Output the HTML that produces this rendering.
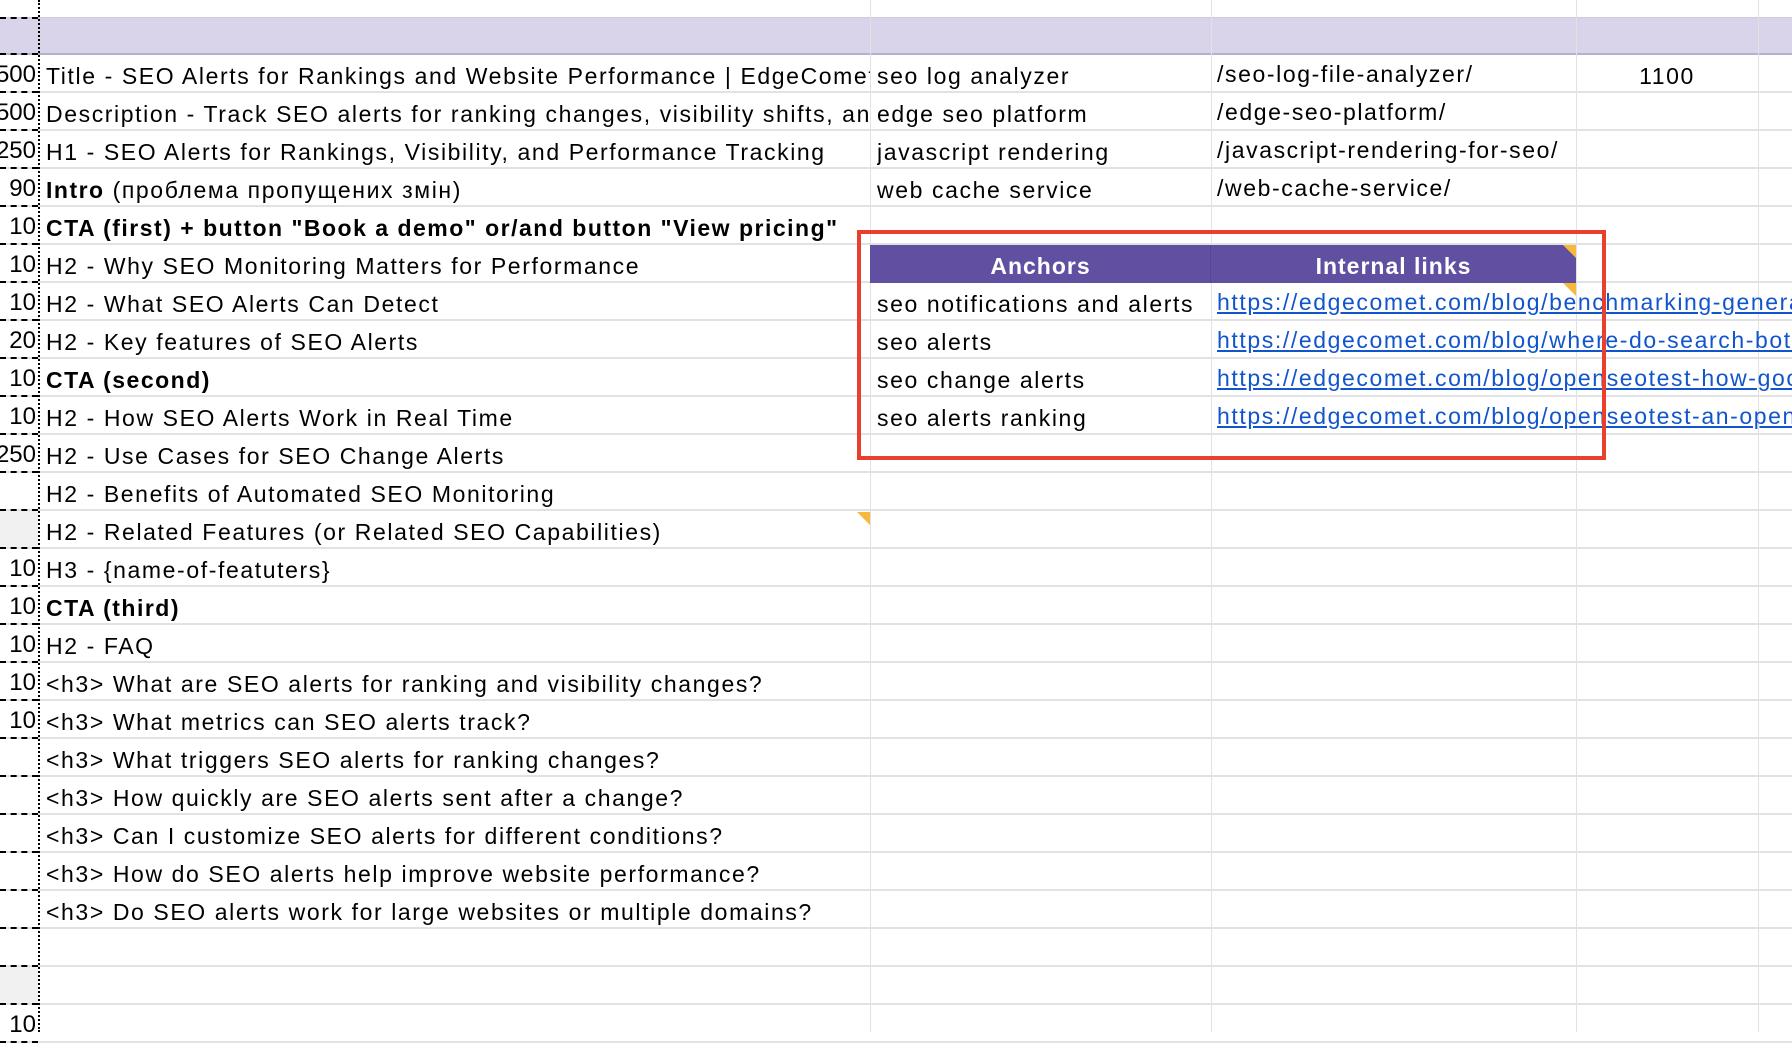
<!DOCTYPE html>
<html><head><meta charset="utf-8"><style>
*{margin:0;padding:0;box-sizing:border-box}
body{width:1792px;height:1032px;overflow:hidden;background:#fff;position:relative;font-family:"Liberation Sans","Noto Sans CJK SC",sans-serif;font-size:23px;letter-spacing:1.6px;color:#000}
.hl{position:absolute;left:0;width:1792px;height:2px;background:#e2e2e2}
.vl{position:absolute;top:0;width:1px;height:1032px;background:#e2e2e2}
.t{position:absolute;white-space:nowrap;overflow:hidden;line-height:38px;height:38px;padding-top:2px}
.n{position:absolute;left:0;width:36px;text-align:right;direction:rtl;line-height:38px;height:38px;overflow:hidden;white-space:nowrap;letter-spacing:0;font-size:24px;padding-top:1px}
.b{font-weight:bold;letter-spacing:1.5px}
a{color:#1155cc;text-decoration:underline}
.dh{position:absolute;left:0;width:38px;border-top:2px dashed #000;height:0}
</style></head><body>
<div style="position:absolute;left:0;top:17px;width:1792px;height:38px;background:#d9d4e9;border-bottom:2px solid #b7b2cc;border-top:1px solid #cfcae0"></div>
<div class="vl" style="left:870px"></div>
<div class="vl" style="left:1211px"></div>
<div class="vl" style="left:1576px"></div>
<div class="vl" style="left:1758px"></div>
<div style="position:absolute;left:0;top:511px;width:38px;height:36px;background:#f1f1f1"></div>
<div style="position:absolute;left:0;top:967px;width:38px;height:36px;background:#f1f1f1"></div>
<div id="rows"></div>
<div style="position:absolute;left:38px;top:0;height:1032px;border-left:2px dotted #000"></div>
<div style="position:absolute;left:870px;top:245px;width:706px;height:38px;background:#6150a2"></div>
<div style="position:absolute;left:1210px;top:245px;width:1px;height:38px;background:#54468f"></div>
<div class="t b" style="left:870px;top:245px;width:341px;text-align:center;color:#fff;letter-spacing:1px">Anchors</div>
<div class="t b" style="left:1211px;top:245px;width:365px;text-align:center;color:#fff;letter-spacing:1px">Internal links</div>
<div style="position:absolute;left:1563px;top:245px;width:0;height:0;border-left:13px solid transparent;border-top:13px solid #f6b93b"></div>
<div style="position:absolute;left:1563px;top:283px;width:0;height:0;border-left:13px solid transparent;border-top:13px solid #f6b93b"></div>
<div style="position:absolute;left:857px;top:512px;width:0;height:0;border-left:13px solid transparent;border-top:13px solid #f6b93b"></div>
<div style="position:absolute;left:857px;top:230px;width:749px;height:230px;border:4px solid #e8402d"></div>
<script>
var B=[["500","Title - SEO Alerts for Rankings and Website Performance | EdgeComet"],["500","Description - Track SEO alerts for ranking changes, visibility shifts, and website performance"],["250","H1 - SEO Alerts for Rankings, Visibility, and Performance Tracking"],["90","<b class='b'>Intro</b> (проблема пропущених змін)"],["10","<span class='b'>CTA (first) + button \"Book a demo\" or/and button \"View pricing\"</span>"],["10","H2 - Why SEO Monitoring Matters for Performance"],["10","H2 - What SEO Alerts Can Detect"],["20","H2 - Key features of SEO Alerts"],["10","<span class='b'>CTA (second)</span>"],["10","H2 - How SEO Alerts Work in Real Time"],["250","H2 - Use Cases for SEO Change Alerts"],["","H2 - Benefits of Automated SEO Monitoring"],["","H2 - Related Features (or Related SEO Capabilities)"],["10","H3 - {name-of-featuters}"],["10","<span class='b'>CTA (third)</span>"],["10","H2 - FAQ"],["10","&lt;h3&gt; What are SEO alerts for ranking and visibility changes?"],["10","&lt;h3&gt; What metrics can SEO alerts track?"],["","&lt;h3&gt; What triggers SEO alerts for ranking changes?"],["","&lt;h3&gt; How quickly are SEO alerts sent after a change?"],["","&lt;h3&gt; Can I customize SEO alerts for different conditions?"],["","&lt;h3&gt; How do SEO alerts help improve website performance?"],["","&lt;h3&gt; Do SEO alerts work for large websites or multiple domains?"],["",""],["",""],["10",""]];
var C=["seo log analyzer","edge seo platform","javascript rendering","web cache service","","","seo notifications and alerts","seo alerts","seo change alerts","seo alerts ranking"];
var D=["/seo-log-file-analyzer/","/edge-seo-platform/","/javascript-rendering-for-seo/","/web-cache-service/","","",
"<a>https://edgecomet.com/blog/benchmarking-generative-engine</a>","<a>https://edgecomet.com/blog/where-do-search-bots-go</a>","<a>https://edgecomet.com/blog/openseotest-how-google</a>","<a>https://edgecomet.com/blog/openseotest-an-open-source</a>"];
var h="";
for(var i=0;i<B.length;i++){var y=55+i*38;
h+='<div class="hl" style="top:'+(y+36)+'px"></div>';
h+='<div class="dh" style="top:'+(y+36)+'px"></div>';
h+='<div class="n" style="top:'+y+'px">'+B[i][0]+'</div>';
h+='<div class="t" style="left:46px;top:'+y+'px;width:824px">'+B[i][1]+'</div>';
if(C[i])h+='<div class="t" style="left:877px;top:'+y+'px;width:333px">'+C[i]+'</div>';
if(D[i])h+='<div class="t" style="left:1217px;top:'+(y-2)+'px;width:'+(i>5?575:358)+'px">'+D[i]+'</div>';}
h+='<div class="dh" style="top:53px"></div><div class="dh" style="top:17px"></div>';
h+='<div class="t" style="left:1576px;top:55px;width:182px;text-align:center">1100</div>';
document.getElementById("rows").innerHTML=h;
</script>
</body></html>
